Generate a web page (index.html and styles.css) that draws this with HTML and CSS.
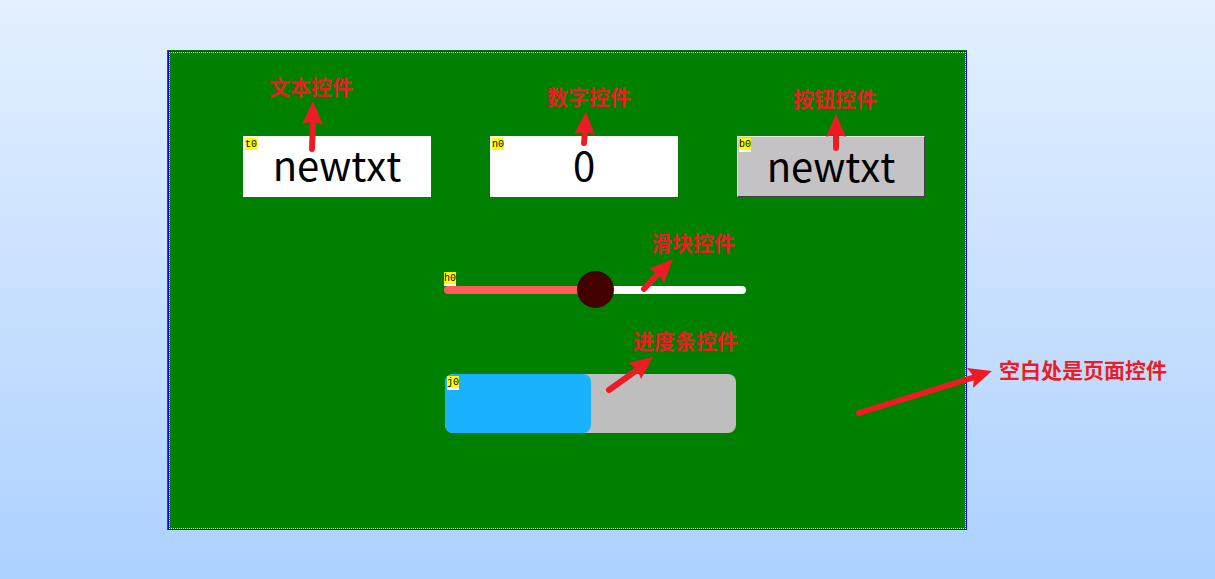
FILE: index.html
```html
<!DOCTYPE html>
<html lang="zh-CN">
<head>
<meta charset="utf-8">
<title>控件</title>
<link rel="stylesheet" href="styles.css">
</head>
<body>
<main class="page">
  <div class="top-row">
    <div class="widget">
      <output class="field" id="t0">newtxt</output>
      <span class="tag tag-inset">t0</span>
      <svg class="arrow" aria-hidden="true"><path class="shaft" d="M69 13L70-14"/><path class="head" d="M70-35L80-11L70-15L59-12Z"/></svg>
      <label class="note note-text" for="t0">文本控件</label>
    </div>
    <div class="widget">
      <output class="field" id="n0">0</output>
      <span class="tag tag-inset">n0</span>
      <svg class="arrow" aria-hidden="true"><path class="shaft" d="M94 7L95-4"/><path class="head" d="M96-24L105-1L95-5L84-2Z"/></svg>
      <label class="note note-number" for="n0">数字控件</label>
    </div>
    <div class="widget">
      <button class="field push" id="b0" type="button">newtxt</button>
      <span class="tag tag-inset tag-lined">b0</span>
      <svg class="arrow" aria-hidden="true"><path class="shaft" d="M99 12V-2"/><path class="head" d="M99-22L109 1L99-2L89 1Z"/></svg>
      <label class="note note-button" for="b0">按钮控件</label>
    </div>
  </div>
  <div class="widget slider-row">
    <input class="slider" id="h0" type="range" min="0" max="100" value="50">
    <span class="tag tag-slider tag-lined">h0</span>
    <svg class="arrow" aria-hidden="true"><path class="shaft" d="M200 19L214 4"/><path class="head" d="M229-11L220 13L215 4L205-1Z"/></svg>
    <label class="note note-slider" for="h0">滑块控件</label>
  </div>
  <div class="widget progress-row">
    <progress class="progress" id="j0" max="100" value="50"></progress>
    <span class="tag tag-inset tag-lined">j0</span>
    <svg class="arrow" aria-hidden="true"><path class="shaft" d="M164 16L192-4"/><path class="head" d="M208-17L196 5L192-5L183-11Z"/></svg>
    <label class="note note-progress" for="j0">进度条控件</label>
  </div>
  <svg class="arrow page-arrow" aria-hidden="true"><path class="shaft" d="M-108 363L8 327"/><path class="head" d="M25 321L6 338L7 327L0 318Z"/></svg>
  <span class="note note-page">空白处是页面控件</span>
</main>
</body>
</html>
```
FILE: styles.css
```css
* {
  box-sizing: border-box;
}

html {
  min-height: 100%;
  background: linear-gradient(#e4f0ff, #add1ff);
}

body {
  margin: 0;
  padding: 50px 248px 49px 167px;
  font-family: "Noto Sans CJK SC", sans-serif;
}

.page {
  position: relative;
  aspect-ratio: 5 / 3;
  padding: 86px 42px 0 76px;
  background: #008000;
}

.page::before {
  content: "";
  position: absolute;
  inset: 1px 0 0 1px;
  border: 1px solid #0000ff;
  pointer-events: none;
}

.page::after {
  content: "";
  position: absolute;
  inset: 2px 1px 1px 2px;
  background:
    repeating-linear-gradient(90deg, #fff 0 1px, #008000 1px 2px) top / 100% 1px no-repeat,
    repeating-linear-gradient(90deg, #fff 0 1px, #008000 1px 2px) bottom / 100% 1px no-repeat,
    repeating-linear-gradient(#fff 0 1px, #008000 1px 2px) left / 1px 100% no-repeat,
    repeating-linear-gradient(#fff 0 1px, #008000 1px 2px) right / 1px 100% no-repeat;
  pointer-events: none;
}

.top-row {
  display: flex;
  gap: 59px;
}

.widget {
  position: relative;
}

.top-row .widget {
  flex: 1;
}

.field {
  display: block;
  width: 100%;
  height: 61px;
  padding: 0 0 4px;
  background: #fff;
  color: #000;
  font: 40px/57px "Noto Sans CJK SC", sans-serif;
  font-kerning: none;
  text-align: center;
}

.push {
  border: 1px solid;
  border-color: #e8e8e8 #424142 #424142 #e8e8e8;
  background: #c5c2c5;
}

.slider-row {
  width: 302px;
  margin: 73px 0 0 201px;
}

.slider {
  appearance: none;
  display: block;
  width: 100%;
  height: 39px;
  margin: 0;
  background: transparent;
}

.slider::-webkit-slider-runnable-track {
  height: 8px;
  border-radius: 4px;
  background: linear-gradient(90deg, #ff5d5a 50%, #fff 50%);
}

.slider::-webkit-slider-thumb {
  appearance: none;
  width: 37px;
  height: 37px;
  margin-top: -15px;
  border-radius: 50%;
  background: #420000;
}

.progress-row {
  width: 291px;
  margin: 65px 0 0 202px;
}

.progress {
  appearance: none;
  display: block;
  width: 100%;
  height: 59px;
  border: 0;
  border-radius: 8px;
  overflow: hidden;
  background: #bdbebd;
}

.progress::-webkit-progress-bar {
  background: #bdbebd;
}

.progress::-webkit-progress-value {
  border-radius: 8px;
  background: #19b2ff;
}

.tag {
  position: absolute;
  top: 0;
  left: 0;
  height: 12px;
  background: #ff0;
  color: #000;
  font: 10px/14px "Liberation Mono", monospace;
}

.tag-inset {
  top: 2px;
  left: 2px;
}

.tag-slider {
  top: 2px;
}

.tag-lined {
  box-shadow: 0 2px #fff;
}

.arrow {
  position: absolute;
  top: 0;
  left: 0;
  z-index: 1;
  width: 1px;
  height: 1px;
  overflow: visible;
  pointer-events: none;
}

.page-arrow {
  left: 100%;
}

.shaft {
  fill: none;
  stroke: #ed1c24;
  stroke-width: 6;
  stroke-linecap: round;
}

.head {
  fill: #ed1c24;
}

.note {
  position: absolute;
  color: #ed1c24;
  font-size: 21px;
  font-weight: 700;
  line-height: 24px;
  white-space: nowrap;
}

.note-text {
  top: -62px;
  left: 26px;
}

.note-number {
  top: -52px;
  left: 57px;
}

.note-button {
  top: -50px;
  left: 56px;
}

.note-slider {
  top: -40px;
  left: 207px;
}

.note-progress {
  top: -46px;
  left: 188px;
}

.note-page {
  top: 307px;
  left: calc(100% + 32px);
}
```
